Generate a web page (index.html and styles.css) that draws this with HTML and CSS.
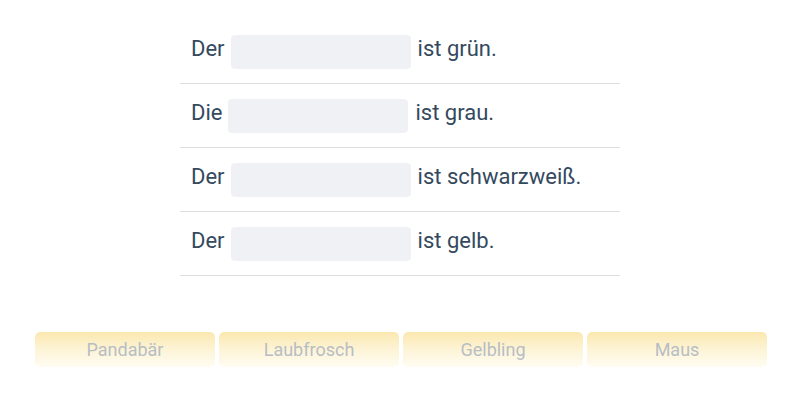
FILE: index.html
```html
<!DOCTYPE html>
<html lang="de">
<head>
<meta charset="utf-8">
<link rel="stylesheet" href="styles.css">
</head>
<body>
<div class="page">
  <div class="sentences">
    <div class="row"><span class="word">Der</span><span class="blank"></span><span class="word">ist grün.</span></div>
    <div class="row"><span class="word">Die</span><span class="blank"></span><span class="word">ist grau.</span></div>
    <div class="row"><span class="word">Der</span><span class="blank"></span><span class="word">ist schwarzweiß.</span></div>
    <div class="row"><span class="word">Der</span><span class="blank"></span><span class="word">ist gelb.</span></div>
  </div>
  <div class="choices">
    <div class="choice">Pandabär</div>
    <div class="choice">Laubfrosch</div>
    <div class="choice">Gelbling</div>
    <div class="choice">Maus</div>
  </div>
</div>
</body>
</html>
```
FILE: styles.css
```css
html, body {
  margin: 0;
  padding: 0;
  background: #ffffff;
}
.page {
  font-family: Roboto, "Liberation Sans", sans-serif;
  padding-top: 20px;
}
.sentences {
  width: 440px;
  margin: 0 auto;
}
.row {
  display: flex;
  align-items: center;
  height: 63px;
  border-bottom: 1px solid #dcdde0;
  padding: 0 11px;
  font-size: 22px;
  color: #34495e;
}
.word {
  padding-bottom: 6px;
}
.blank {
  width: 180px;
  height: 34px;
  margin: 0 7px 0 6px;
  background: #f0f1f5;
  border-radius: 4px;
}
.choices {
  display: flex;
  justify-content: center;
  gap: 4px;
  margin-top: 56px;
  padding-left: 2px;
}
.choice {
  width: 180px;
  height: 35px;
  box-sizing: border-box;
  border-radius: 5px;
  background: linear-gradient(to bottom, #fbe8b0 0%, #fdf4d6 50%, #fffcf3 100%);
  color: #b8bdc5;
  font-size: 18px;
  display: flex;
  align-items: center;
  justify-content: center;
}
```
